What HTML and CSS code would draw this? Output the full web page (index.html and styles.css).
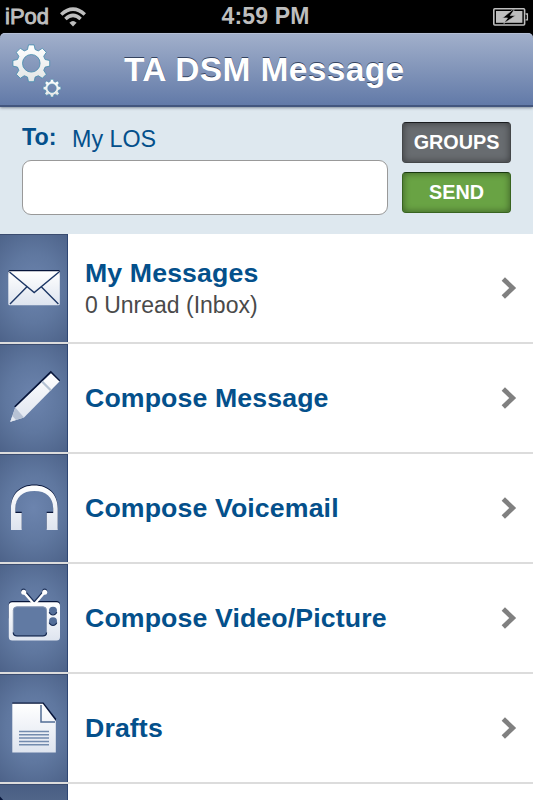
FILE: index.html
```html
<!DOCTYPE html>
<html lang="en">
<head>
  <meta charset="UTF-8" />
  <meta name="viewport" content="width=device-width, initial-scale=1.0"/>
  <title>TA DSM Message</title>
  <link rel="stylesheet" href="styles.css">
</head>
<body>

  <div class="status">
    <div class="carrier">
      <span>iPod</span>
      <svg width="26" height="20" viewBox="0 0 26 20" fill="none" stroke="#bebebe" stroke-width="3.5">
        <path d="M1.2 7.5Q13-3.4 24.8 7.5"/>
        <path d="M5.4 12Q13 4.8 20.6 12"/>
        <path d="M9.4 15.8Q13 12 16.6 15.8L13 19.4Z" fill="#bebebe" stroke="none"/>
      </svg>
    </div>
    <div class="clock">4:59 PM</div>
    <svg class="battery" width="36" height="18" viewBox="0 0 36 18">
      <rect x=".8" y=".8" width="30.8" height="16.2" rx="1" fill="#000" stroke="#bebebe" stroke-width="1.6"/>
      <rect x="3" y="3" width="26.4" height="11.8" fill="#bebebe"/>
      <path d="M32.6 6H34.4v5.8h-1.8" fill="#000" stroke="#bebebe" stroke-width="1.3"/>
      <path d="M19.5 1.8L9.5 10h5l-3.7 5.6L22.5 7.6h-5.2l4-5.8z" fill="#000" stroke="#bebebe" stroke-width=".7"/>
    </svg>
  </div>

  <header class="header">
    <svg class="gears" width="54" height="58" viewBox="0 0 54 58">
      <defs>
        <linearGradient id="gearFill" x1="0" y1="0" x2="0" y2="1">
          <stop offset="0" stop-color="#fff"/>
          <stop offset="1" stop-color="#e2e5e5"/>
        </linearGradient>
        <path id="gear" fill-rule="evenodd" d="M-3.8-13.8L-2.8-18.4H2.8L3.8-13.8L7-12.4L11-15L15-11L12.4-7L13.8-3.8L18.4-2.8V2.8L13.8 3.8L12.4 7L15 11L11 15L7 12.4L3.8 13.8L2.8 18.4H-2.8L-3.8 13.8L-7 12.4L-11 15L-15 11L-12.4 7L-13.8 3.8L-18.4 2.8V-2.8L-13.8-3.8L-12.4-7L-15-11L-11-15L-7-12.4ZM0-8.8A8.8 8.8 0 1 0 0 8.8A8.8 8.8 0 1 0 0-8.8Z"/>
      </defs>
      <g fill="url(#gearFill)" stroke="#438cad" stroke-width=".8" stroke-linejoin="round">
        <use href="#gear" transform="translate(21.3 22.3)"/>
        <use href="#gear" transform="translate(42 47.2) scale(.48)" stroke-width="1.2"/>
      </g>
    </svg>
    <h1>TA DSM Message</h1>
  </header>

  <section class="compose">
    <div class="recipient">
      <div class="to"><strong>To:</strong><span>My LOS</span></div>
      <input type="text" class="field" aria-label="To" />
    </div>
    <div class="actions">
      <button type="button" class="btn">GROUPS</button>
      <button type="button" class="btn send">SEND</button>
    </div>
  </section>

  <svg class="defs" width="0" height="0">
    <linearGradient id="paper" x1="0" y1="0" x2="0" y2="1">
      <stop offset="0" stop-color="#fff"/>
      <stop offset="1" stop-color="#dee4ef"/>
    </linearGradient>
  </svg>

  <ul class="menu">
    <li>
      <div class="tile">
        <svg width="68" height="108" viewBox="0 0 68 108">
          <rect x="8.5" y="36" width="51.5" height="5" rx="1.5" fill="#07153a"/>
          <rect x="8.3" y="37.3" width="51.5" height="33.9" rx="1.5" fill="url(#paper)"/>
          <path d="M9.5 38L34.2 58.6L59 38M10 70L26.7 53M58.4 70L41.5 53" fill="none" stroke="#1d3766" stroke-width="1.4"/>
        </svg>
      </div>
      <div class="label">
        <h2>My Messages</h2>
        <p>0 Unread (Inbox)</p>
      </div>
      <svg class="chevron" width="16" height="22" viewBox="0 0 16 22"><path d="M2.3 2L11.7 11L2.3 20"/></svg>
    </li>
    <li>
      <div class="tile">
        <svg width="68" height="108" viewBox="0 0 68 108">
          <path d="M14.8 63L50.8 28L59.5 37" fill="none" stroke="#07153a" stroke-width="1.8"/>
          <path d="M15.3 63.5L51 29.2L59.5 37.5L24 73.5L10.3 77.8Z" fill="url(#paper)"/>
          <path d="M15.3 63.5L24 73.5L10.3 77.8Z" fill="#b7c2d4"/>
          <path d="M10.3 77.8L12.4 72L16 75.9Z" fill="#e4e9f1"/>
          <path d="M42 37.5L51 46.5" stroke="#b5c2d3" stroke-width="2.3"/>
        </svg>
      </div>
      <div class="label"><h2>Compose Message</h2></div>
      <svg class="chevron" width="16" height="22" viewBox="0 0 16 22"><path d="M2.3 2L11.7 11L2.3 20"/></svg>
    </li>
    <li>
      <div class="tile">
        <svg width="68" height="108" viewBox="0 0 68 108">
          <path d="M11 76V54.5C11 40 20.5 31.6 34.3 31.6S57.7 40 57.7 54.5V76H46.7V59H53.2V54.5C53.2 43 46 37 34.3 37S15.4 43 15.4 54.5V59H21.7V76Z" fill="#07153a" transform="translate(0 -1.2)"/>
          <path d="M11 76V54.5C11 40 20.5 31.6 34.3 31.6S57.7 40 57.7 54.5V76H46.7V59H53.2V54.5C53.2 43 46 37 34.3 37S15.4 43 15.4 54.5V59H21.7V76Z" fill="url(#paper)"/>
        </svg>
      </div>
      <div class="label"><h2>Compose Voicemail</h2></div>
      <svg class="chevron" width="16" height="22" viewBox="0 0 16 22"><path d="M2.3 2L11.7 11L2.3 20"/></svg>
    </li>
    <li>
      <div class="tile">
        <svg width="68" height="108" viewBox="0 0 68 108">
          <rect x="8.8" y="37" width="51.2" height="20" rx="3.5" fill="#07153a"/>
          <path d="M24 27.2L34.3 39L44.5 27.2" fill="none" stroke="#1c3059" stroke-width="3"/>
          <circle cx="23.5" cy="27" r="2.5" fill="#1c3059"/>
          <circle cx="44.7" cy="27" r="2.5" fill="#1c3059"/>
          <path d="M23.7 28.3L34.3 40.5L44.7 28.3" fill="none" stroke="#fff" stroke-width="2.4"/>
          <circle cx="23.7" cy="28.3" r="2.5" fill="#fff"/>
          <circle cx="44.7" cy="28.3" r="2.5" fill="#fff"/>
          <rect x="8.8" y="38.3" width="51.2" height="38.3" rx="3.5" fill="url(#paper)"/>
          <rect x="13.3" y="42.8" width="33.2" height="29" rx="3.5" fill="#617aa3" stroke="#8495b2" stroke-width="1"/>
          <path d="M13.3 68.5Q13.3 71.8 17 71.8H43Q46.5 71.8 46.5 68.5" fill="none" stroke="#152952" stroke-width="1.3"/>
          <g fill="#536d98">
            <circle cx="53" cy="46.8" r="4"/>
            <circle cx="53" cy="57.3" r="4"/>
          </g>
          <path d="M49.2 48.2A4 4 0 0 0 56.8 48.2M49.2 58.7A4 4 0 0 0 56.8 58.7" fill="none" stroke="#172b54" stroke-width="1.1"/>
        </svg>
      </div>
      <div class="label"><h2>Compose Video/Picture</h2></div>
      <svg class="chevron" width="16" height="22" viewBox="0 0 16 22"><path d="M2.3 2L11.7 11L2.3 20"/></svg>
    </li>
    <li>
      <div class="tile">
        <svg width="68" height="108" viewBox="0 0 68 108">
          <path d="M12.3 30V28.5H43.5L56 44.5V47" fill="#07153a"/>
          <path d="M12.3 29.8H42.8L55.8 47V78.6H12.3Z" fill="url(#paper)"/>
          <path d="M41 31V48H55" fill="none" stroke="#536d95" stroke-width="1.5"/>
          <path d="M19 57.5H49M19 60.8H49M19 64.1H49M19 67.4H49M19 70.7H49" stroke="#738bae" stroke-width="1.5"/>
        </svg>
      </div>
      <div class="label"><h2>Drafts</h2></div>
      <svg class="chevron" width="16" height="22" viewBox="0 0 16 22"><path d="M2.3 2L11.7 11L2.3 20"/></svg>
    </li>
    <li class="peek">
      <div class="tile">
        <svg width="68" height="16" viewBox="0 0 68 16">
          <path d="M0 12.5L3.2 16H0Z" fill="#07153a"/>
        </svg>
      </div>
    </li>
  </ul>

</body>
</html>
```
FILE: styles.css
```css
* {
  box-sizing: border-box;
}
body {
  margin: 0;
  background: #000;
  font-family: "Liberation Sans", Arial, sans-serif;
}
h1, h2, p, ul {
  margin: 0;
  padding: 0;
}
svg {
  display: block;
}
.defs {
  position: absolute;
}

/* status bar */
.status {
  display: grid;
  grid-template-columns: 1fr auto 1fr;
  align-items: center;
  height: 33px;
  padding: 0 4px 0 5px;
  color: #bebebe;
  font-size: 23px;
  line-height: 33px;
}
.carrier {
  display: flex;
  align-items: center;
  gap: 11px;
  font-size: 22px;
  -webkit-text-stroke: 0.9px #bebebe;
}
.clock {
  margin-right: 3px;
  font-weight: bold;
  letter-spacing: 0.15px;
}
.battery {
  justify-self: end;
}

/* title bar */
.header {
  position: relative;
  height: 74px;
  border-radius: 5px 5px 0 0;
  border-bottom: 2px solid #43567e;
  background: linear-gradient(#a2b0cb, #627aa8);
  box-shadow: inset 0 1px 0 #b3bed4, 0 1px 3px rgba(50, 60, 80, 0.55);
  z-index: 1;
}
.gears {
  position: absolute;
  left: 10px;
  top: 8px;
}
.header h1 {
  padding-left: 124px;
  color: #fff;
  font-size: 33.5px;
  line-height: 73px;
  letter-spacing: 0.36px;
  text-shadow: 0 -1.5px 0.5px #34435f;
}

/* recipient form */
.compose {
  display: flex;
  gap: 14px;
  height: 127px;
  padding: 15px 22px 0;
  background: #dee8ef;
}
.recipient {
  flex: 1;
}
.to {
  display: flex;
  gap: 15px;
  height: 38px;
  color: #04508b;
  font-size: 23.3px;
  line-height: 34px;
}
.to strong {
  width: 35px;
  line-height: 31px;
}
.field {
  display: block;
  width: 100%;
  height: 55px;
  border: 1px solid #999;
  border-radius: 9px;
  background: #fff;
}
.actions {
  display: flex;
  flex-direction: column;
  gap: 9px;
  width: 109px;
}
.btn {
  height: 41px;
  padding: 0;
  border: 1px solid #444749;
  border-top-color: #191b1e;
  border-radius: 4px;
  background: #686c70;
  box-shadow: inset 0 0 7px rgba(0, 0, 0, 0.45);
  color: #fff;
  font: bold 19.8px/39px "Liberation Sans", Arial, sans-serif;
}
.send {
  border-color: #386420;
  border-top-color: #18380f;
  background: #69a344;
}

/* menu list */
.menu {
  list-style: none;
}
.menu li {
  display: flex;
  align-items: center;
  height: 110px;
  border-bottom: 2px solid #dcdcdc;
  background: #fff;
}
.menu .peek {
  height: 16px;
  border-bottom: 0;
}
.tile {
  width: 68px;
  height: 108px;
  border-right: 1px solid #2e4673;
  background: radial-gradient(ellipse 62px 78px at 50% 50%, #6c84ae, #5f779f 45%, #485d83 100%);
  box-shadow: inset 0 1px 0 #3b4c6f;
}
.peek .tile {
  height: 16px;
  background: linear-gradient(#485d83, #506589);
}
.label {
  flex: 1;
  padding-left: 17px;
}
.label h2 {
  color: #04508b;
  font-size: 26.7px;
  line-height: 32px;
  letter-spacing: 0.12px;
}
.label p {
  color: #4a4a4a;
  font-size: 23px;
  line-height: 32px;
}
.label h2:not(:only-child) {
  padding-top: 2px;
}
.chevron {
  margin-right: 16px;
  fill: none;
  stroke: #808080;
  stroke-width: 4.8px;
}
```
